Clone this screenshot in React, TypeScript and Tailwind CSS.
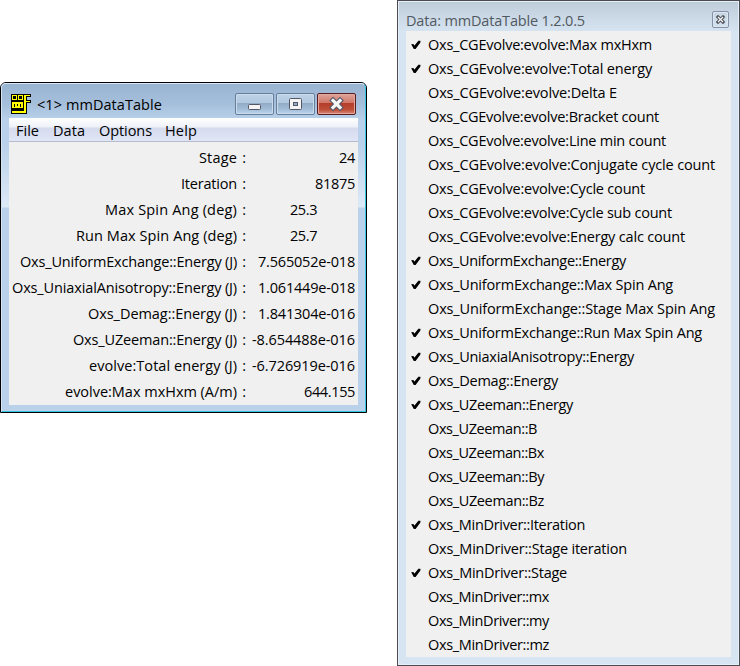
import { useLayoutEffect, useRef, useState } from "react";

const readings = [
  { label: "Stage", w: 38, value: "24", vw: 16 },
  { label: "Iteration", w: 56, value: "81875", vw: 40 },
  { label: "Max Spin Ang (deg)", w: 132, value: "25.3", vw: 27, inset: true },
  { label: "Run Max Spin Ang (deg)", w: 161, value: "25.7", vw: 27, inset: true },
  { label: "Oxs_UniformExchange::Energy (J)", w: 217, value: "7.565052e-018", vw: 97 },
  { label: "Oxs_UniaxialAnisotropy::Energy (J)", w: 225, value: "1.061449e-018", vw: 97 },
  { label: "Oxs_Demag::Energy (J)", w: 149, value: "1.841304e-016", vw: 97 },
  { label: "Oxs_UZeeman::Energy (J)", w: 164, value: "-8.654488e-016", vw: 103 },
  { label: "evolve:Total energy (J)", w: 148, value: "-6.726919e-016", vw: 103 },
  { label: "evolve:Max mxHxm (A/m)", w: 172, value: "644.155", vw: 51 },
];

const items: [string, number, boolean?][] = [
  ["Oxs_CGEvolve:evolve:Max mxHxm", 224, true],
  ["Oxs_CGEvolve:evolve:Total energy", 224, true],
  ["Oxs_CGEvolve:evolve:Delta E", 189],
  ["Oxs_CGEvolve:evolve:Bracket count", 231],
  ["Oxs_CGEvolve:evolve:Line min count", 238],
  ["Oxs_CGEvolve:evolve:Conjugate cycle count", 287],
  ["Oxs_CGEvolve:evolve:Cycle count", 217],
  ["Oxs_CGEvolve:evolve:Cycle sub count", 244],
  ["Oxs_CGEvolve:evolve:Energy calc count", 257],
  ["Oxs_UniformExchange::Energy", 198, true],
  ["Oxs_UniformExchange::Max Spin Ang", 245, true],
  ["Oxs_UniformExchange::Stage Max Spin Ang", 287],
  ["Oxs_UniformExchange::Run Max Spin Ang", 274, true],
  ["Oxs_UniaxialAnisotropy::Energy", 206, true],
  ["Oxs_Demag::Energy", 130, true],
  ["Oxs_UZeeman::Energy", 145, true],
  ["Oxs_UZeeman::B", 109],
  ["Oxs_UZeeman::Bx", 116],
  ["Oxs_UZeeman::By", 116],
  ["Oxs_UZeeman::Bz", 116],
  ["Oxs_MinDriver::Iteration", 157, true],
  ["Oxs_MinDriver::Stage iteration", 199],
  ["Oxs_MinDriver::Stage", 139, true],
  ["Oxs_MinDriver::mx", 121],
  ["Oxs_MinDriver::my", 121],
  ["Oxs_MinDriver::mz", 121],
];

/* Tracks the text so that it fills the requested width. */
function Fit({ text, width }: { text: string; width: number }) {
  const ref = useRef<HTMLSpanElement>(null);
  const [spacing, setSpacing] = useState(0);
  useLayoutEffect(() => {
    const natural = ref.current!.getBoundingClientRect().width;
    setSpacing((s) => s + (width - natural) / text.length);
  }, [text, width]);
  return (
    <span ref={ref} className="inline-block whitespace-pre" style={{ letterSpacing: spacing }}>
      {text}
    </span>
  );
}

function Tick() {
  return (
    <svg width="10" height="10" viewBox="0 0 10 10">
      <path d="M0.2 4.3 L2.3 4 L3.5 5.6 L7.4 0.8 L9.4 0.8 L9.4 2.6 L4.6 9 L2.8 9 Z" fill="#000" />
    </svg>
  );
}

function AppIcon() {
  const strokes = "M2.5 1.5H6.5V5.5H2.5Z M8.5 1.5H12.5V5.5H8.5Z M20 1.5H15.5V18.5H2 M15.5 7.5H20";
  return (
    <svg width="22" height="21" viewBox="0 0 22 21" shapeRendering="crispEdges">
      <path d="M1 0H17V20H1Z" fill="#000" />
      <path d="M16 0H21V3H16Z M16 6H21V9H16Z" fill="#000" />
      <path d={strokes} fill="none" stroke="#ff0" strokeWidth="1" />
      <path d="M14 1H16V19H14Z M2 17H16V19H2Z M2 8H13V14H2Z" fill="#ff0" />
      <path d="M4 10V13 M7 10V12 M10 10V13" stroke="#000" transform="translate(.5 0)" />
    </svg>
  );
}

function Caption({ kind }: { kind: "min" | "max" | "close" }) {
  const tone =
    kind === "close"
      ? "border-[#591c20] bg-[linear-gradient(#dda59c_0%,#cf7668_45%,#b53e29_47%,#be4e38_78%,#d88978_100%)] shadow-[inset_0_0_0_1px_#e5a79d]"
      : "border-[#667f9b] bg-[linear-gradient(#bfd3e7_0%,#b1c8df_45%,#92acc7_47%,#a2bcd6_75%,#bdd5ee_100%)] shadow-[inset_0_0_0_1px_#c9dbec]";
  return (
    <div className={`h-[22px] w-[39px] rounded-[2px] border ${tone}`}>
      <svg width="37" height="20" viewBox="0 0 37 20">
        {kind === "min" && <rect x="12.5" y="10.5" width="12" height="5" rx="1" fill="#f4f4f4" stroke="#535666" />}
        {kind === "max" && (
          <>
            <rect x="12.5" y="4.5" width="12" height="11" rx="1" fill="#f4f4f4" stroke="#535666" />
            <rect x="16.5" y="8.5" width="4" height="3" fill="#93abc5" stroke="#535666" />
          </>
        )}
        {kind === "close" && (
          <>
            <path d="M15 6.5L22 13.5M22 6.5L15 13.5" stroke="#535666" strokeWidth="5.4" strokeLinecap="square" />
            <path d="M15 6.5L22 13.5M22 6.5L15 13.5" stroke="#f6f6f6" strokeWidth="3.2" strokeLinecap="square" />
          </>
        )}
      </svg>
    </div>
  );
}

export default function App() {
  return (
    <div className="flex h-[666px] w-[740px] items-start justify-between overflow-hidden bg-white font-['Open_Sans','Noto_Sans',sans-serif] text-[14.5px] text-black">
      <section className="mt-[82px] h-[331px] w-[367px] rounded-t-[6px] border border-black bg-[#b9d1ea]">
        <div className="flex h-full flex-col rounded-t-[5px] border border-t-[#d9e8f7] border-r-[#35c5e2] border-b-[#35c5e2] border-l-[#d3e4f5] bg-[linear-gradient(#99b4d1_0,#a5bfdb_20px,#b9d1ea_36px,#b9d1ea_60px,#dce9f7_123px,#b9d1ea_124px)] px-[7px] pb-[7px]">
          <header className="flex h-[34px] shrink-0 items-start">
            <div className="mt-[10px] ml-px">
              <AppIcon />
            </div>
            <h1 className="mt-[11px] ml-[5px] leading-5">
              <Fit text="<1> mmDataTable" width={125} />
            </h1>
            <div className="mt-[9px] mr-[2px] ml-auto flex gap-[2px]">
              <Caption kind="min" />
              <Caption kind="max" />
              <Caption kind="close" />
            </div>
          </header>
          <nav className="flex h-6 shrink-0 border-b border-[#b6bccc] bg-[linear-gradient(#fff_0,#eef1f8_9px,#d5dbed_10px,#e1e6f6_23px)] pl-[7px] leading-[25px]">
            <div className="w-[37px]"><Fit text="File" width={23} /></div>
            <div className="w-[46px]"><Fit text="Data" width={32} /></div>
            <div className="w-[66px]"><Fit text="Options" width={53} /></div>
            <div><Fit text="Help" width={32} /></div>
          </nav>
          <main className="flex grow flex-col bg-[#f0f0f0] pt-[3px]">
            {readings.map((r) => (
              <div key={r.label} className="flex h-[26px] items-center">
                <div className="w-[228px] text-right whitespace-nowrap"><Fit text={r.label} width={r.w} /></div>
                <div className="w-[9px] text-right">:</div>
                <div className={r.inset ? "w-[71px] text-right" : "w-[109px] text-right"}>
                  <Fit text={r.value} width={r.vw} />
                </div>
              </div>
            ))}
          </main>
        </div>
      </section>

      <section className="h-[666px] w-[343px] border border-[#4c4c50] bg-[#d7e4f2]">
        <div className="flex h-full flex-col border border-[#e6eef8] bg-[linear-gradient(#bfcddb_0,#d7e4f2_30px)] px-[7px] pb-[7px]">
          <header className="flex h-[29px] shrink-0 items-start text-[#515960]">
            <h2 className="mt-[9px] leading-5"><Fit text="Data: mmDataTable 1.2.0.5" width={179} /></h2>
            <div className="mt-[9px] mr-[2px] ml-auto flex size-[17px] items-center justify-center rounded-[2px] border border-[#8491a8] shadow-[inset_0_0_0_1px_#dce7f2]">
              <svg width="9" height="9" viewBox="0 0 9 9">
                <path d="M2 2L7 7M7 2L2 7" stroke="#50535c" strokeWidth="3.2" strokeLinecap="square" />
                <path d="M2 2L7 7M7 2L2 7" stroke="#f5f5f5" strokeWidth="1.2" />
              </svg>
            </div>
          </header>
          <ul className="grow bg-[#f0f0f0] pt-[2px]">
            {items.map(([name, width, checked]) => (
              <li key={name} className="flex h-6 items-center">
                <span className="flex w-[22px] pl-[5px]">{checked && <Tick />}</span>
                <Fit text={name} width={width} />
              </li>
            ))}
          </ul>
        </div>
      </section>
    </div>
  );
}
